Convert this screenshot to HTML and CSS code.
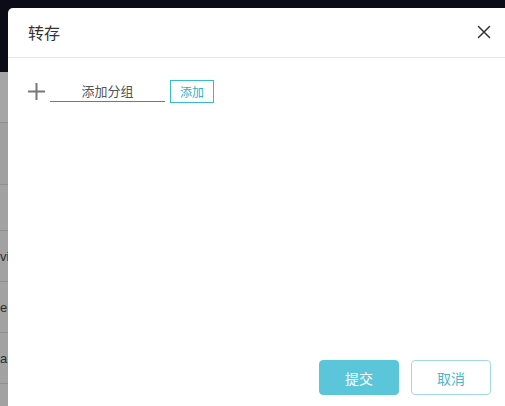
FILE: index.html
```html
<!DOCTYPE html>
<html lang="zh">
<head>
<meta charset="utf-8">
<title>转存</title>
<link rel="stylesheet" href="styles.css">
</head>
<body>
<div class="page">
  <div class="topbar"></div>
  <div class="list">
    <div class="row r1"></div>
    <div class="row r2"></div>
    <div class="row r3"></div>
    <div class="row"><span class="cell">vi</span></div>
    <div class="row"><span class="cell">e</span></div>
    <div class="row"><span class="cell">a</span></div>
    <div class="row"></div>
  </div>
</div>
<div class="dialog">
  <div class="dialog-header">
    <span class="dialog-title">转存</span>
    <button class="close" aria-label="关闭">
      <svg width="14" height="14" viewBox="0 0 14 14"><path d="M1.5 1.5 L12.5 12.5 M12.5 1.5 L1.5 12.5" stroke="#333" stroke-width="1.5" fill="none" stroke-linecap="round"/></svg>
    </button>
  </div>
  <div class="dialog-body">
    <div class="add-row">
      <svg class="plus" width="17" height="17" viewBox="0 0 17 17"><path d="M8.5 0 V17 M0 8.5 H17" stroke="#777" stroke-width="2" fill="none"/></svg>
      <input class="group-input" type="text" placeholder="添加分组">
      <button class="btn-add">添加</button>
    </div>
  </div>
  <div class="dialog-footer">
    <button class="btn btn-primary">提交</button>
    <button class="btn btn-default">取消</button>
  </div>
</div>
</body>
</html>
```
FILE: styles.css
```css
html, body {
  margin: 0;
  padding: 0;
  width: 505px;
  height: 406px;
  overflow: hidden;
  font-family: "Noto Sans CJK SC", "Noto Sans", sans-serif;
}
.page {
  display: flex;
  flex-direction: column;
  height: 406px;
  background: #a2a2a2;
  overflow: hidden;
}
.topbar {
  height: 72px;
  background: #0c0c19;
  flex: none;
}
.list {
  display: flex;
  flex-direction: column;
}
.row {
  border-bottom: 1px solid #8f8f8f;
  height: 50px;
  display: flex;
  align-items: center;
  overflow: hidden;
  flex: none;
}
.row.r1 { height: 50px; background: #a5a5a5; }
.row.r2 { height: 61px; background: #a0a0a0; }
.row.r3 { height: 45px; }
.cell {
  font-family: "Liberation Sans", sans-serif;
  font-size: 13px;
  color: #2c2c2c;
  margin-left: 0;
  white-space: nowrap;
}
.dialog {
  position: absolute;
  left: 8px;
  top: 8px;
  width: 503px;
  height: 398px;
  background: #fff;
  border-radius: 5px 5px 0 0;
  display: flex;
  flex-direction: column;
}
.dialog-header {
  height: 50px;
  box-sizing: border-box;
  border-bottom: 1px solid #e6e6e6;
  display: flex;
  align-items: center;
  justify-content: space-between;
  padding: 0 20px 2px 20px;
}
.dialog-title {
  font-size: 16px;
  color: #333;
}
.close {
  border: 0;
  background: none;
  padding: 0;
  width: 14px;
  height: 14px;
  display: flex;
}
.dialog-body {
  flex: 1;
  padding: 22px 20px 0 20px;
}
.add-row {
  display: flex;
  align-items: flex-start;
  height: 24px;
}
.plus {
  margin-right: 5px;
  margin-top: 3px;
}
.group-input {
  width: 115px;
  height: 22px;
  box-sizing: border-box;
  border: 0;
  border-bottom: 1px solid #777;
  outline: none;
  padding: 0;
  text-align: center;
  font-family: inherit;
  font-size: 13px;
  color: #555;
  background: transparent;
}
.group-input::placeholder {
  color: #555;
}
.btn-add {
  margin-left: 5px;
  width: 44px;
  height: 23px;
  box-sizing: border-box;
  border: 1px solid #38bccd;
  background: #fff;
  color: #2ab3c6;
  font-family: inherit;
  font-size: 12px;
  padding: 0;
}
.dialog-footer {
  display: flex;
  justify-content: flex-end;
  gap: 12px;
  padding: 0 20px 11px 0;
}
.btn {
  width: 80px;
  height: 35px;
  box-sizing: border-box;
  border-radius: 4px;
  font-family: inherit;
  font-size: 14px;
  padding: 0;
}
.btn-primary {
  background: #5bc6da;
  border: 1px solid #5bc6da;
  color: #fff;
}
.btn-default {
  background: #fff;
  border: 1px solid #a3d9e5;
  color: #4db6cc;
}
```
